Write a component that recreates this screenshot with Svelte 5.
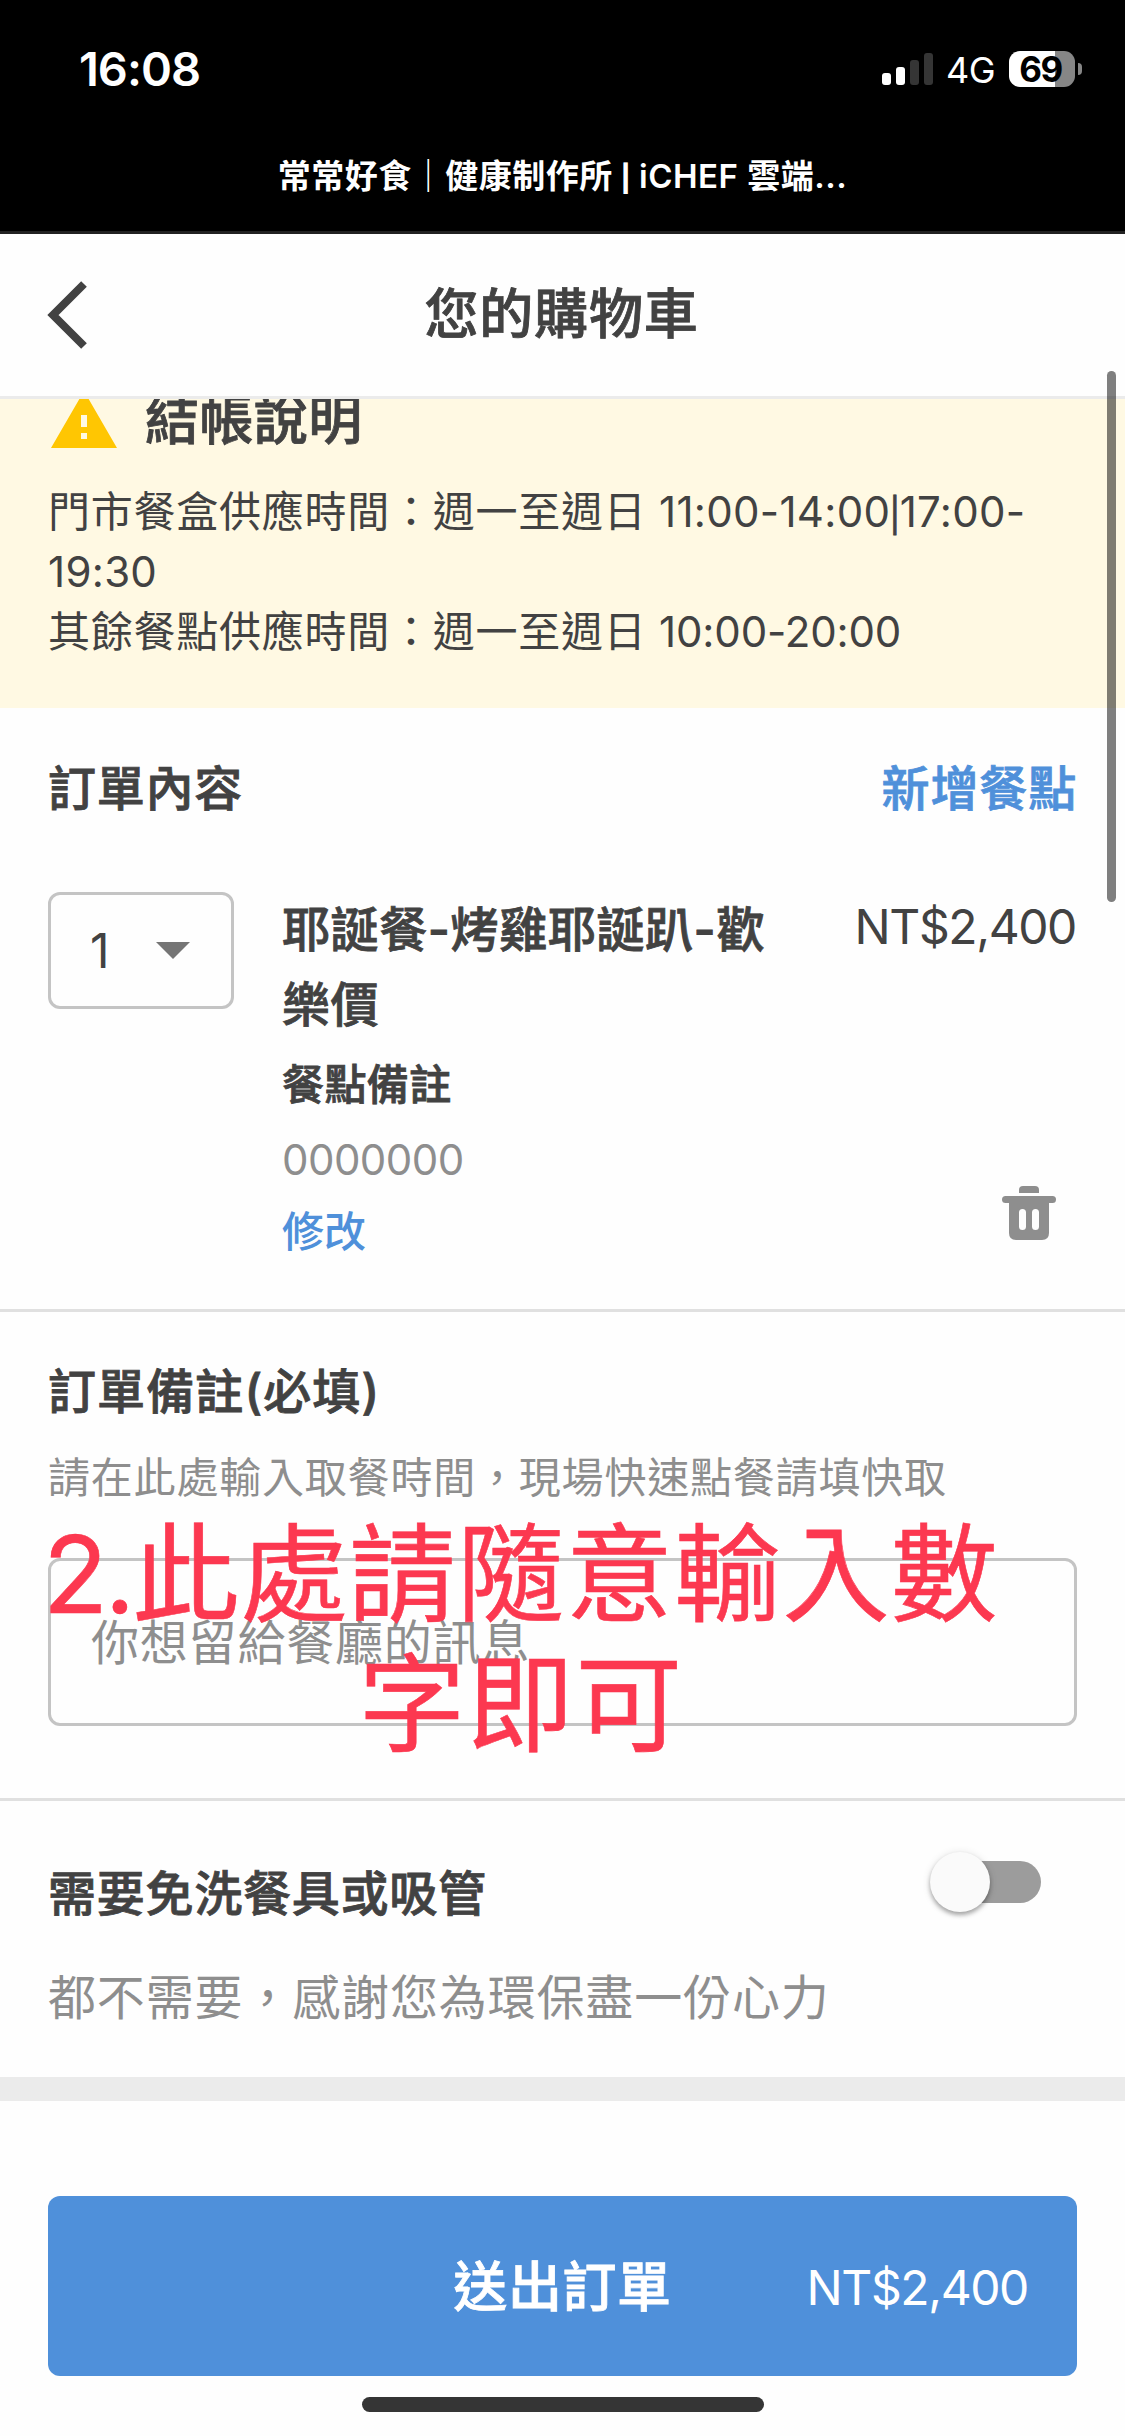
<script lang="ts">
	let quantity = $state(1);
	let needUtensils = $state(false);

	const signalBars = [12, 18, 25, 32];
	const total = 'NT$2,400';
</script>

<div class="screen">
	<div class="browser-top">
		<div class="status-bar">
			<span class="clock">16:08</span>
			<div class="status-icons">
				<div class="signal">
					{#each signalBars as height, i}
						<span class="bar" class:off={i > 1} style="height: {height}px"></span>
					{/each}
				</div>
				<span class="network">4G</span>
				<div class="battery"><span>69</span></div>
				<div class="battery-cap"></div>
			</div>
		</div>
		<div class="tab-title">常常好食｜健康制作所 <span class="pipe">|</span> iCHEF 雲端...</div>
	</div>

	<header class="header">
		<button class="back" aria-label="返回">
			<svg width="40" height="68" viewBox="0 0 40 68" fill="none" stroke="#424242" stroke-width="8">
				<path d="M37 3 L6 34 L37 65"></path>
			</svg>
		</button>
		<h1>您的購物車</h1>
	</header>

	<section class="notice">
		<div class="notice-title">
			<svg width="72" height="72" viewBox="0 0 24 24" fill="#ffc602">
				<path d="M1 21h22L12 2 1 21zm12-3h-2v-2h2v2zm0-4h-2v-4h2v4z"></path>
			</svg>
			<h2>結帳說明</h2>
		</div>
		<p>門市餐盒供應時間：週一至週日 <span class="hours wide">11:00-14:00<span class="pipe">|</span>17:00-</span><br /><span class="hours wide">19:30</span></p>
		<p>其餘餐點供應時間：週一至週日 <span class="hours">10:00-20:00</span></p>
	</section>

	<section class="order">
		<div class="order-head">
			<h3>訂單內容</h3>
			<a href="#menu">新增餐點</a>
		</div>
		<div class="item">
			<button class="quantity">
				<span>{quantity}</span>
				<svg width="34" height="17" viewBox="0 0 34 17" fill="#757575">
					<path d="M0 0h34L17 17z"></path>
				</svg>
			</button>
			<div class="item-info">
				<div class="item-name">耶誕餐-烤雞耶誕趴-歡樂價</div>
				<div class="item-label">餐點備註</div>
				<div class="item-note">0000000</div>
				<a class="edit" href="#edit">修改</a>
			</div>
			<div class="item-side">
				<span class="price">{total}</span>
				<button class="remove" aria-label="刪除">
					<svg width="54" height="54" viewBox="0 0 54 54" fill="#8e8e8e">
						<path d="M17 7V4q0-4 4-4h12q4 0 4 4v3z"></path>
						<rect x="0" y="10" width="54" height="7" rx="3.5"></rect>
						<path fill-rule="evenodd" d="M7 15h40v32q0 7-7 7H14q-7 0-7-7zM20.5 23a3.5 3.5 0 0 0-3.5 3.5v14a3.5 3.5 0 0 0 7 0v-14a3.5 3.5 0 0 0-3.5-3.5zM33.5 23a3.5 3.5 0 0 0-3.5 3.5v14a3.5 3.5 0 0 0 7 0v-14a3.5 3.5 0 0 0-3.5-3.5z"></path>
					</svg>
				</button>
			</div>
		</div>
	</section>

	<section class="remark">
		<h3>訂單備註(必填)</h3>
		<p>請在此處輸入取餐時間，現場快速點餐請填快取</p>
		<div class="remark-box">
			<span>你想留給餐廳的訊息</span>
			<div class="hint">
				<span class="hint-num">2.</span>此處請隨意輸入數<br />字即可
			</div>
		</div>
	</section>

	<section class="utensils">
		<div class="utensils-head">
			<h3>需要免洗餐具或吸管</h3>
			<button
				class="toggle"
				class:on={needUtensils}
				aria-label="需要免洗餐具或吸管"
				onclick={() => (needUtensils = !needUtensils)}
			>
				<span class="knob"></span>
			</button>
		</div>
		<p>都不需要，感謝您為環保盡一份心力</p>
	</section>

	<footer class="footer">
		<button class="submit">
			<span></span>
			<span class="submit-label">送出訂單</span>
			<span class="submit-price">{total}</span>
		</button>
		<div class="home-indicator"></div>
	</footer>

	<div class="scrollbar"></div>
</div>

<style>
	:global(body) {
		background: #fff;
	}

	.screen {
		position: relative;
		width: 1125px;
		height: 2436px;
		overflow: hidden;
		display: flex;
		flex-direction: column;
		background: #fefefe;
		color: #424242;
		font-family: Inter, 'Noto Sans CJK TC', sans-serif;
	}

	.screen * {
		box-sizing: border-box;
	}

	h1,
	h2,
	h3,
	p {
		margin: 0;
		font-weight: 400;
	}

	button {
		margin: 0;
		padding: 0;
		border: none;
		background: none;
		color: inherit;
		font-family: inherit;
		cursor: pointer;
	}

	a {
		color: #4f90da;
		text-decoration: none;
	}

	svg {
		display: block;
	}

	/* medium is too thin for headings and bold too heavy */
	h1,
	h2,
	h3,
	.order-head a,
	.item-name,
	.item-label,
	.submit-label {
		font-weight: 500;
		-webkit-text-stroke: 0.8px currentColor;
	}

	h3 {
		font-size: 48px;
		line-height: 72px;
		letter-spacing: 0.75px;
	}

	.pipe {
		font-size: 0.8em;
		line-height: 1;
	}

	.browser-top {
		flex: none;
		height: 234px;
		background: #000;
		border-bottom: 3px solid #222;
		color: #fff;
	}

	.status-bar {
		display: flex;
		justify-content: space-between;
		align-items: center;
		height: 138px;
		padding: 0 43px 0 79px;
	}

	.clock {
		font-size: 47px;
		font-weight: 600;
		line-height: 60px;
		letter-spacing: -1px;
	}

	.status-icons {
		display: flex;
		align-items: center;
	}

	.signal {
		display: flex;
		align-items: flex-end;
		gap: 5px;
		height: 32px;
	}

	.bar {
		width: 9px;
		border-radius: 3px;
		background: #fff;
	}

	.bar.off {
		background: #353535;
	}

	.network {
		width: 51px;
		margin: 2px 0 0 13px;
		font-size: 36px;
		line-height: 40px;
		letter-spacing: -0.6px;
	}

	.battery {
		width: 66px;
		height: 36px;
		margin-left: 12px;
		border-radius: 11px;
		background: linear-gradient(to right, #fff 46px, #868686 46px);
		color: #000;
		font-size: 35px;
		font-weight: 700;
		line-height: 37px;
		letter-spacing: -1.5px;
		text-align: center;
	}

	.battery span {
		margin-left: -3px;
	}

	.battery-cap {
		width: 4px;
		height: 12px;
		margin-left: 3px;
		border-radius: 0 4px 4px 0;
		background: #868686;
	}

	.tab-title {
		height: 76px;
		font-size: 33px;
		font-weight: 600;
		line-height: 76px;
		letter-spacing: 0.5px;
		text-align: center;
		white-space: nowrap;
	}

	.tab-title .pipe {
		margin: 0 -1px;
		font-weight: 800;
	}

	.header {
		flex: none;
		display: grid;
		grid-template-columns: 48px 1fr 48px;
		align-items: center;
		height: 165px;
		padding: 0 49px 0 47px;
		border-bottom: 3px solid #ebebeb;
	}

	h1 {
		font-size: 54px;
		line-height: 80px;
		letter-spacing: 0.8px;
		text-align: center;
	}

	.notice {
		flex: none;
		height: 309px;
		padding: 0 48px;
		overflow: hidden;
		background: #fff9e3;
	}

	.notice-title {
		display: flex;
		align-items: center;
		gap: 25px;
		height: 72px;
		margin: -14px 0 25px;
	}

	h2 {
		font-size: 54px;
		line-height: 72px;
		letter-spacing: 0.4px;
	}

	.notice p {
		font-size: 42px;
		line-height: 60px;
		letter-spacing: 0.75px;
		white-space: nowrap;
	}

	.notice .hours {
		letter-spacing: -0.15px;
	}

	.notice .hours.wide {
		letter-spacing: 0.3px;
	}

	.notice .pipe {
		margin: 0 -1px;
		-webkit-text-stroke: 0.8px currentColor;
	}

	.order {
		flex: none;
		height: 604px;
		padding: 45px 48px 0;
		border-bottom: 3px solid #e0e0e0;
	}

	.order-head {
		display: flex;
		justify-content: space-between;
	}

	.order-head a {
		font-size: 48px;
		line-height: 72px;
		letter-spacing: 0.85px;
	}

	.item {
		display: flex;
		align-items: flex-start;
		margin-top: 67px;
	}

	.quantity {
		flex: none;
		display: flex;
		justify-content: space-between;
		align-items: center;
		width: 186px;
		height: 117px;
		padding: 0 41px 0 39px;
		border: 3px solid #c4c4c4;
		border-radius: 12px;
		font-size: 48px;
	}

	.item-info {
		flex: none;
		display: flex;
		flex-direction: column;
		width: 500px;
		margin-left: 48px;
	}

	.item-name {
		font-size: 48px;
		line-height: 75px;
		letter-spacing: 0.6px;
	}

	.item-label {
		margin-top: 13px;
		font-size: 42px;
		line-height: 60px;
		letter-spacing: 0.4px;
	}

	.item-note {
		margin-top: 15px;
		color: #8e8e8e;
		font-size: 42px;
		line-height: 60px;
		letter-spacing: -0.55px;
	}

	.edit {
		margin-top: 12px;
		font-size: 42px;
		font-weight: 500;
		line-height: 60px;
	}

	.item-side {
		flex: 1;
		display: flex;
		flex-direction: column;
		align-items: flex-end;
	}

	.price {
		margin-right: 1px;
		font-size: 48px;
		line-height: 69px;
		letter-spacing: -1.4px;
	}

	.remove {
		margin: 225px 21px 0 0;
	}

	.remark {
		flex: none;
		height: 489px;
		padding: 44px 48px 0;
		border-bottom: 3px solid #e0e0e0;
	}

	.remark h3 {
		letter-spacing: 1.1px;
	}

	.remark p {
		margin-top: 20px;
		color: #8e8e8e;
		font-size: 42px;
		line-height: 60px;
		letter-spacing: 0.8px;
		white-space: nowrap;
	}

	.remark-box {
		position: relative;
		height: 168px;
		margin-top: 50px;
		padding: 46px 40px;
		border: 3px solid #c4c4c4;
		border-radius: 12px;
		color: #8e8e8e;
		font-size: 48px;
		line-height: 72px;
		letter-spacing: 0.8px;
	}

	/* annotation laid over the input */
	.hint {
		position: absolute;
		top: -52px;
		left: -20px;
		width: 980px;
		color: #fc3850;
		font-size: 107px;
		line-height: 130px;
		letter-spacing: 1.4px;
		text-align: center;
		white-space: nowrap;
		-webkit-text-stroke: 0.6px currentColor;
	}

	.hint-num {
		letter-spacing: -3.4px;
	}

	.utensils {
		flex: none;
		height: 300px;
		padding: 57px 48px 0;
		border-bottom: 24px solid #ebebeb;
	}

	.utensils-head {
		display: flex;
		justify-content: space-between;
	}

	.toggle {
		display: flex;
		align-items: center;
		width: 102px;
		height: 42px;
		margin: 3px 36px 0 0;
		border-radius: 21px;
		background: #9c9c9c;
	}

	.toggle.on {
		justify-content: flex-end;
		background: #4f90da;
	}

	.knob {
		flex: none;
		width: 60px;
		height: 60px;
		margin: 0 -9px;
		border-radius: 50%;
		background: #fafafa;
		box-shadow: 0 3px 4px rgba(0, 0, 0, 0.3), 0 1px 8px rgba(0, 0, 0, 0.12);
	}

	.utensils p {
		margin-top: 32px;
		color: #8e8e8e;
		font-size: 48px;
		line-height: 72px;
		letter-spacing: 0.85px;
	}

	.footer {
		flex: 1;
		display: flex;
		flex-direction: column;
		align-items: center;
		padding: 95px 48px 0;
	}

	.submit {
		display: grid;
		grid-template-columns: 1fr auto 1fr;
		align-items: center;
		width: 100%;
		height: 180px;
		padding: 3px 49px 0;
		border-radius: 12px;
		background: #4f90da;
		color: #fff;
	}

	.submit-label {
		font-size: 54px;
		line-height: 80px;
		letter-spacing: 0.6px;
	}

	.submit-price {
		font-size: 48px;
		line-height: 80px;
		letter-spacing: -1.4px;
		text-align: right;
	}

	.home-indicator {
		width: 402px;
		height: 15px;
		margin-top: 21px;
		border-radius: 8px;
		background: #353535;
	}

	.scrollbar {
		position: absolute;
		top: 371px;
		right: 9px;
		width: 9px;
		height: 531px;
		border-radius: 5px;
		background: rgba(0, 0, 0, 0.5);
	}
</style>
